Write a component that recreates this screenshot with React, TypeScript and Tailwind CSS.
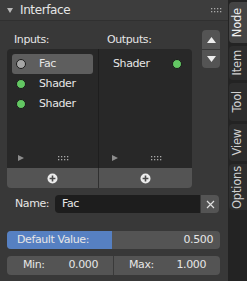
import React from "react";

const Dot = ({ color }: { color: string }) => (
  <span className={`block shrink-0 w-[10px] h-[10px] rounded-full border border-[#1a1a1a] ${color}`} />
);

const Grip = () => (
  <svg width="11" height="5" viewBox="0 0 11 5">
    {[0, 3, 6, 9].map((x) =>
      [0, 3].map((y) => <rect key={`${x}-${y}`} x={x} y={y} width="1.3" height="1.3" fill="#a8a8a8" />)
    )}
  </svg>
);

const Play = () => (
  <svg width="6" height="6" viewBox="0 0 6 6">
    <path d="M0 0 L6 3 L0 6 Z" fill="#8c8c8c" />
  </svg>
);

const AddIcon = () => (
  <svg width="11" height="11" viewBox="0 0 11 11">
    <circle cx="5.5" cy="5.5" r="5" fill="#ececec" />
    <path d="M5.5 2.6 V8.4 M2.6 5.5 H8.4" stroke="#4a4a4a" strokeWidth="1.6" />
  </svg>
);

const Tab = ({ label, h, active }: { label: string; h: string; active?: boolean }) => (
  <div
    className={`${h} w-[18px] rounded-l-[4px] flex items-center justify-center ${
      active ? "bg-[#444444] text-[#eeeeee]" : "bg-[#2d2d2d] text-[#d0d0d0]"
    }`}
  >
    <span className="[writing-mode:vertical-rl] rotate-180 leading-none text-[11.5px] tracking-[-0.2px]">{label}</span>
  </div>
);

export default function App() {
  return (
    <div className="w-[247px] h-[281px] flex bg-[#232323] overflow-hidden font-['DejaVu_Sans',sans-serif] text-[11px] text-[#e6e6e6] tracking-[-0.4px]">
      {/* Panel */}
      <div className="w-[228px] flex flex-col bg-[#383838]">
        {/* Header */}
        <div className="h-[21px] flex items-center bg-[#3d3d3d] border-b border-[#303030] pl-[7px] pr-[6px]">
          <svg width="6" height="5" viewBox="0 0 6 5">
            <path d="M0 0 H6 L3 5 Z" fill="#b8b8b8" />
          </svg>
          <span className="ml-[7px] text-[12px] text-[#e6e6e6]">Interface</span>
          <span className="ml-auto mt-[1px]">
            <Grip />
          </span>
        </div>

        {/* Body */}
        <div className="flex-1 pt-[9px] pl-[7px] pr-[8px]">
          <div className="flex">
            <div className="w-[185px] flex mt-[1px]">
              {/* Inputs */}
              <div className="w-[91px] flex flex-col">
                <div className="h-[18px] flex items-center pl-[7px]">Inputs:</div>
                <div className="h-[119px] bg-[#282828] rounded-tl-[4px] flex flex-col px-[5px] pt-[5px]">
                  <div className="h-[20px] flex items-center pl-[4px] bg-[#5e5e5e] rounded-[3px]">
                    <Dot color="bg-[#a6a6a6]" />
                    <span className="ml-[13px]">Fac</span>
                  </div>
                  <div className="h-[20px] flex items-center pl-[4px]">
                    <Dot color="bg-[#63c763]" />
                    <span className="ml-[13px]">Shader</span>
                  </div>
                  <div className="h-[20px] flex items-center pl-[4px]">
                    <Dot color="bg-[#63c763]" />
                    <span className="ml-[13px]">Shader</span>
                  </div>
                  <div className="mt-auto h-[20px] flex items-center pl-[6px]">
                    <Play />
                    <span className="ml-[34px]">
                      <Grip />
                    </span>
                  </div>
                </div>
                <div className="h-[20px] bg-[#545454] rounded-bl-[4px] flex items-center justify-center">
                  <AddIcon />
                </div>
              </div>

              {/* Outputs */}
              <div className="w-[94px] flex flex-col">
                <div className="h-[18px] flex items-center pl-[9px]">Outputs:</div>
                <div className="h-[119px] bg-[#282828] border-l border-[#1e1e1e] rounded-tr-[4px] flex flex-col px-[5px] pt-[5px]">
                  <div className="h-[20px] flex items-center pl-[9px] pr-[5px]">
                    <span>Shader</span>
                    <span className="ml-auto">
                      <Dot color="bg-[#63c763]" />
                    </span>
                  </div>
                  <div className="mt-auto h-[20px] flex items-center pl-[8px]">
                    <Play />
                    <span className="ml-[33px]">
                      <Grip />
                    </span>
                  </div>
                </div>
                <div className="h-[20px] bg-[#545454] border-l border-[#303030] rounded-br-[4px] flex items-center justify-center">
                  <AddIcon />
                </div>
              </div>
            </div>

            {/* Move up / down */}
            <div className="ml-[10px] w-[18px] flex flex-col gap-px">
              <div className="h-[19px] bg-[#545454] rounded-t-[4px] flex items-center justify-center">
                <svg width="9" height="6" viewBox="0 0 9 6">
                  <path d="M0 6 L4.5 0 L9 6 Z" fill="#eeeeee" />
                </svg>
              </div>
              <div className="h-[18px] bg-[#545454] rounded-b-[4px] flex items-center justify-center">
                <svg width="9" height="6" viewBox="0 0 9 6">
                  <path d="M0 0 L4.5 6 L9 0 Z" fill="#eeeeee" />
                </svg>
              </div>
            </div>
          </div>

          {/* Name */}
          <div className="mt-[7px] h-[18px] flex items-center">
            <span className="w-[48px] pl-[8px]">Name:</span>
            <div className="w-[145px] h-full bg-[#1d1d1d] rounded-l-[4px] flex items-center pl-[7px]">Fac</div>
            <div className="ml-px w-[18px] h-full bg-[#545454] rounded-r-[4px] flex items-center justify-center">
              <svg width="9" height="9" viewBox="0 0 9 9">
                <path d="M1 1 L8 8 M8 1 L1 8" stroke="#e0e0e0" strokeWidth="1.2" />
              </svg>
            </div>
          </div>

          {/* Default value slider */}
          <div className="mt-[18px] w-[213px] h-[18px] bg-[#545454] rounded-[4px] flex overflow-hidden">
            <div className="w-[105px] bg-[#5680c2] flex items-center pl-[10px] whitespace-nowrap">Default Value:</div>
            <div className="flex-1 flex items-center justify-end pr-[7px]">0.500</div>
          </div>

          {/* Min / Max */}
          <div className="mt-[7px] w-[213px] h-[19px] flex rounded-[4px] overflow-hidden bg-[#545454]">
            <div className="w-[106px] flex items-center pl-[16px] pr-[15px]">
              <span>Min:</span>
              <span className="ml-auto">0.000</span>
            </div>
            <div className="flex-1 flex items-center border-l border-[#3a3a3a] pl-[15px] pr-[14px]">
              <span>Max:</span>
              <span className="ml-auto">1.000</span>
            </div>
          </div>
        </div>
      </div>

      {/* Side tabs */}
      <div className="flex-1 flex flex-col items-end pt-[2px] gap-[3px]">
        <Tab label="Node" h="h-[41px]" active />
        <Tab label="Item" h="h-[34px]" />
        <Tab label="Tool" h="h-[38px]" />
        <Tab label="View" h="h-[37px]" />
        <Tab label="Options" h="h-[46px]" />
      </div>
    </div>
  );
}
